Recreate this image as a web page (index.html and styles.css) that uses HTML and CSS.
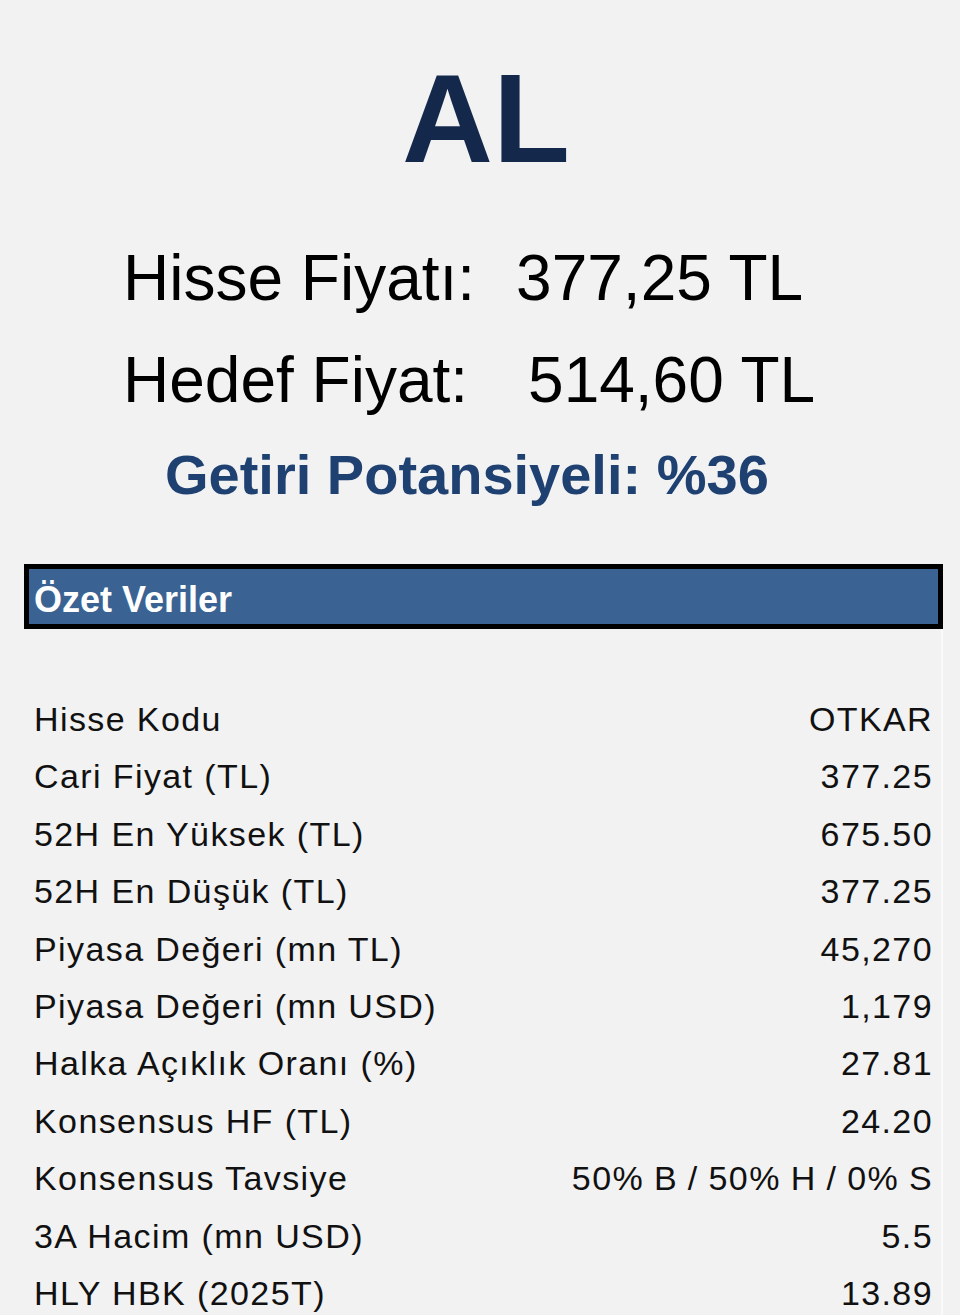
FILE: index.html
```html
<!DOCTYPE html>
<html lang="tr">
<head>
    <meta charset="UTF-8">
    <meta name="viewport" content="width=device-width, initial-scale=1.0">
    <title>OTKAR - AL</title>
    <link rel="stylesheet" href="styles.css">
</head>
<body>
    <h1 class="rating">AL</h1>

    <div class="prices">
        <div class="price-row">
            <span class="price-label">Hisse Fiyatı:</span>
            <span class="price-value">377,25 TL</span>
        </div>
        <div class="price-row target">
            <span class="price-label">Hedef Fiyat:</span>
            <span class="price-value">514,60 TL</span>
        </div>
        <p class="potential">Getiri Potansiyeli: %36</p>
    </div>

    <div class="summary">
        <div class="summary-head">Özet Veriler</div>
        <div class="summary-rows">
            <div class="row"><span>Hisse Kodu</span><span>OTKAR</span></div>
            <div class="row"><span>Cari Fiyat (TL)</span><span>377.25</span></div>
            <div class="row"><span>52H En Yüksek (TL)</span><span>675.50</span></div>
            <div class="row"><span>52H En Düşük (TL)</span><span>377.25</span></div>
            <div class="row"><span>Piyasa Değeri (mn TL)</span><span>45,270</span></div>
            <div class="row"><span>Piyasa Değeri (mn USD)</span><span>1,179</span></div>
            <div class="row"><span>Halka Açıklık Oranı (%)</span><span>27.81</span></div>
            <div class="row"><span>Konsensus HF (TL)</span><span>24.20</span></div>
            <div class="row"><span>Konsensus Tavsiye</span><span class="tight">50% B / 50% H / 0% S</span></div>
            <div class="row"><span>3A Hacim (mn USD)</span><span>5.5</span></div>
            <div class="row"><span>HLY HBK (2025T)</span><span>13.89</span></div>
        </div>
    </div>
</body>
</html>
```

FILE: styles.css
```css
body {
    margin: 0;
    background: #f2f2f2;
    font-family: "Liberation Sans", Arial, sans-serif;
    color: #000;
    overflow: hidden;
}
.rating {
    margin: 56px 0 0 0;
    padding-left: 402px;
    font-size: 126px;
    line-height: 126px;
    font-weight: bold;
    color: #13284a;
}
.prices {
    margin-top: 64px;
}
.price-row {
    display: flex;
    padding-left: 123px;
    font-size: 64px;
    line-height: 64px;
    margin-bottom: 38px;
}
.price-value {
    margin-left: 41px;
}
.price-row.target .price-value {
    margin-left: 60px;
}
.potential {
    margin: -3px 0 0 0;
    padding-left: 165px;
    font-size: 56px;
    line-height: 56px;
    font-weight: bold;
    color: #1f4172;
}
.summary {
    margin: 61px 17px 0 24px;
}
.summary-head {
    border: 5px solid #000;
    background: #3a6393;
    color: #fff;
    font-size: 36px;
    font-weight: bold;
    height: 55px;
    line-height: 62px;
    padding-left: 5px;
}
.summary-rows {
    padding: 62px 8px 0 10px;
    border-right: 2px solid #fafafa;
}
.row {
    display: flex;
    justify-content: space-between;
    font-size: 34px;
    line-height: 57.4px;
    letter-spacing: 1.4px;
    color: #111;
}
.tight {
    word-spacing: -1px;
}
```
